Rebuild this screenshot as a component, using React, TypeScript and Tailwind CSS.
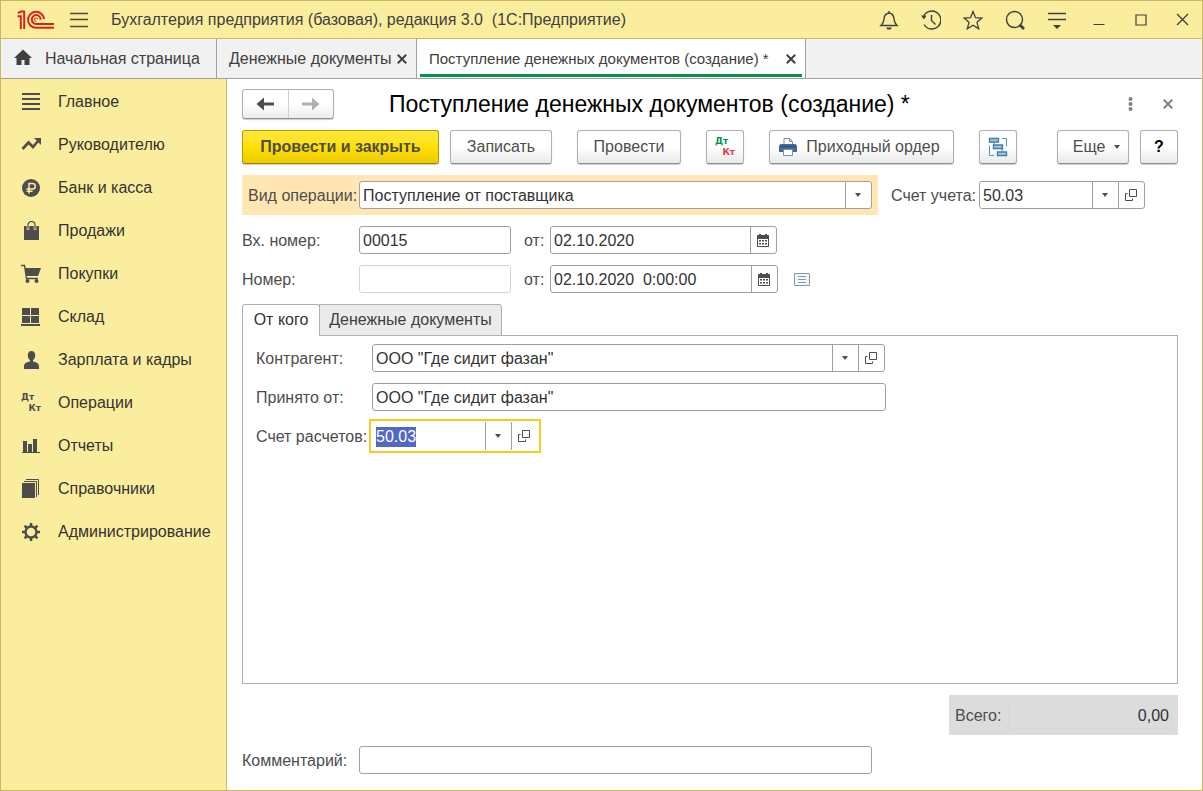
import { useEffect, useRef, useState } from 'react'
import type { ReactNode } from 'react'
import clsx from 'clsx'

const BUTTON =
  'h-[34px] flex items-center justify-center shrink-0 rounded-[3px] border border-[#b0b0b0] border-b-[#8f8f8f] bg-linear-to-b from-white from-50% to-[#e9e9e9] shadow-[0_1px_1px_rgba(0,0,0,0.2)] whitespace-nowrap'

const FIELD = 'h-7 flex rounded-[3px] border bg-white overflow-hidden'

const INPUT = 'flex-1 min-w-0 pt-0.5 bg-transparent text-[#333] outline-none'

const LABEL = 'shrink-0 pt-0.5 whitespace-nowrap'

/* Icons */

function Icon({ size = 20, className, children }: { size?: number; className?: string; children: ReactNode }) {
  return (
    <svg
      width={size}
      height={size}
      viewBox={`0 0 ${size} ${size}`}
      fill="none"
      stroke="currentColor"
      className={clsx('shrink-0', className)}
      aria-hidden="true"
    >
      {children}
    </svg>
  )
}

function Logo() {
  return (
    <svg width="37" height="20" viewBox="0 0 37 20" fill="none" stroke="#d9231d" strokeWidth="2" aria-label="1C">
      <path d="M.8 3.200 4 1.600h3.200V19M.5 6.200h3.300V19" />
      <path d="M27 9.200A8 8 0 1 0 19 17.800H37M23.600 9.800A4.400 4.400 0 1 0 19.400 13.900H37" />
      <path d="M20.600 9.400a1.600 1.600 0 1 0-1.400 1.800" strokeWidth="1" />
    </svg>
  )
}

function CrossIcon({ size = 10, width = 2 }: { size?: number; width?: number }) {
  return (
    <svg width={size} height={size} viewBox="0 0 10 10" stroke="currentColor" strokeWidth={width} className="shrink-0" aria-hidden="true">
      <path d="M.8.8l8.4 8.4M9.2.8.8 9.2" />
    </svg>
  )
}

function CaretIcon() {
  return (
    <svg width="8" height="4" viewBox="0 0 8 4" fill="#4d4d4d" aria-hidden="true">
      <path d="M1 0h6L4 4z" />
    </svg>
  )
}

function OpenIcon() {
  return (
    <svg width="12" height="12" viewBox="0 0 12 12" fill="none" stroke="#4d4d4d" aria-hidden="true">
      <path d="M4.5.5h7v7h-7zM2.5 4.5h-2v7h7v-2" />
    </svg>
  )
}

function CalendarIcon() {
  return (
    <svg width="12" height="13" viewBox="0 0 12 13" fill="#4d4d4d" aria-hidden="true">
      <path d="M2 0h2v1h4V0h2v1h1.500l.5.5v11l-.5.5H.5L0 12.500V1.500L.5 1H2z" />
      <path d="M1 5h10v7H1z" fill="#fff" />
      <path d="M2 6h2v1.500H2zM5 6h2v1.500H5zM8 6h2v1.500H8zM2 9h2v1.500H2zM5 9h2v1.500H5zM8 9h2v1.500H8z" />
    </svg>
  )
}

// Дебет / кредит
function DebitCredit({ colored }: { colored?: boolean }) {
  return (
    <span className="w-5 shrink-0 flex flex-col font-['DejaVu_Sans','Liberation_Sans',sans-serif] text-[9px] leading-[11px] font-bold">
      <span className={clsx('self-start', colored && 'text-[#009646]')}>Дт</span>
      <span className={clsx('self-end', colored && 'text-[#e03a3e]')}>Кт</span>
    </span>
  )
}

const SECTIONS: { title: string; icon: ReactNode }[] = [
  { title: 'Главное', icon: <Icon><path d="M1 2h18M1 7h18M1 12h18M1 17h18" strokeWidth="2" /></Icon> },
  {
    title: 'Руководителю',
    icon: (
      <Icon>
        <path d="M1.500 14 7.500 7.500l4.500 4.500 5-6" strokeWidth="2.600" />
        <path d="M13 3h7v7z" fill="currentColor" stroke="none" />
      </Icon>
    ),
  },
  {
    title: 'Банк и касса',
    icon: (
      <Icon>
        <circle cx="10" cy="10" r="9" fill="currentColor" stroke="none" />
        <path d="M8 15.500V5.500h3.500a2.500 2.500 0 0 1 0 5.500H5.500M5.500 13.200h6" stroke="#fbed9e" strokeWidth="1.500" />
      </Icon>
    ),
  },
  {
    title: 'Продажи',
    icon: (
      <Icon>
        <path d="M3 5h15v14H3z" fill="currentColor" stroke="none" />
        <path d="M7 9V4a3.500 3.500 0 0 1 7 0v5" stroke="#fbed9e" strokeWidth="2.600" />
        <path d="M7 8.500V4a3.500 3.500 0 0 1 7 0v4.500" strokeWidth="1.200" />
      </Icon>
    ),
  },
  {
    title: 'Покупки',
    icon: (
      <Icon>
        <path d="M0 1.500h3.500L5.500 14.500H17" strokeWidth="1.400" />
        <path d="M4 4h16l-3 8H5.200z" fill="currentColor" stroke="none" />
        <circle cx="6.500" cy="17" r="2" fill="currentColor" stroke="none" />
        <circle cx="15.500" cy="17" r="2" fill="currentColor" stroke="none" />
      </Icon>
    ),
  },
  {
    title: 'Склад',
    icon: (
      <Icon>
        <path d="M1 1h8v7H1zM10 1h8v7h-8zM1 9h8v7H1zM10 9h8v7h-8zM0 17h19v2H0z" fill="currentColor" stroke="none" />
      </Icon>
    ),
  },
  {
    title: 'Зарплата и кадры',
    icon: (
      <Icon>
        <path
          d="M10.500 1C13 1 14.200 2.800 14.200 5c0 2.300-.9 4.300-2.200 5.300v1.200c3 .7 6 1.500 6 4.500v3H3v-3c0-3 3-3.800 6-4.500v-1.200C7.700 9.300 6.800 7.300 6.800 5c0-2.200 1.200-4 3.700-4z"
          fill="currentColor"
          stroke="none"
        />
      </Icon>
    ),
  },
  { title: 'Операции', icon: <DebitCredit /> },
  {
    title: 'Отчеты',
    icon: (
      <Icon>
        <path d="M1 16h1V5h4v11h1V8h4v8h1V3h4v13h3v1H1z" fill="currentColor" stroke="none" />
      </Icon>
    ),
  },
  {
    title: 'Справочники',
    icon: (
      <Icon>
        <path d="M1 4h13v15H1z" fill="currentColor" stroke="none" />
        <path d="M3 2.500h12.500V18M5 .5h12.500V16" />
      </Icon>
    ),
  },
  {
    title: 'Администрирование',
    icon: (
      <Icon>
        <circle cx="10" cy="10" r="5.500" strokeWidth="2.400" />
        <path
          d="M10 1v3.500M10 15.500V19M1 10h3.500M15.500 10H19M3.600 3.600l2.500 2.500M13.900 13.900l2.500 2.500M3.600 16.400l2.500-2.500M13.900 6.100l2.500-2.500"
          strokeWidth="2.600"
        />
      </Icon>
    ),
  },
]

/* Form controls */

function AddonButton({ label, children }: { label: string; children: ReactNode }) {
  return (
    <button type="button" aria-label={label} className="w-[26px] shrink-0 flex items-center justify-center pr-0.5 border-l border-[#a0a0a0]">
      {children}
    </button>
  )
}

interface TextFieldProps {
  id: string
  value: string
  className: string
  disabled?: boolean
  addon?: ReactNode
}

function TextField({ id, value, className, disabled, addon }: TextFieldProps) {
  const [text, setText] = useState(value)
  return (
    <div className={clsx(FIELD, className, disabled ? 'border-[#d4d4d4]' : 'border-[#a0a0a0]')}>
      <input id={id} value={text} disabled={disabled} onChange={e => setText(e.target.value)} className={clsx(INPUT, 'px-[3px]')} />
      {addon}
    </div>
  )
}

const REFERENCE_ADDON = (
  <>
    <AddonButton label="Выбрать из списка"><CaretIcon /></AddonButton>
    <AddonButton label="Открыть"><OpenIcon /></AddonButton>
  </>
)

const CALENDAR_ADDON = <AddonButton label="Календарь"><CalendarIcon /></AddonButton>

/* Layout */

function TitleBar() {
  const button = 'w-[42px] h-full flex items-center justify-center'
  return (
    <header className="h-[38px] flex items-center pl-4 border-b border-[#c9b866] bg-[#fbed9e] text-[#404040]">
      <Logo />
      <button type="button" aria-label="Меню" className="ml-[15px]">
        <Icon>
          <path d="M1 3.500h18M1 9.500h18M1 16.500h18" stroke="#4d4a35" strokeWidth="1.300" />
        </Icon>
      </button>
      <h1 className="flex-1 min-w-0 ml-[22px] truncate whitespace-pre">Бухгалтерия предприятия (базовая), редакция 3.0  (1С:Предприятие)</h1>
      <div className="h-full flex items-center">
        <button type="button" aria-label="Уведомления" className={button}>
          <Icon>
            <path d="M2 15.500h16c-2-1.800-2.800-3.500-3-6.500-.2-3.500-1.500-5.500-5-6-3.500.5-4.800 2.500-5 6-.2 3-1 4.700-3 6.500zM10 3V1" strokeWidth="1.400" />
            <path d="M7 17.500h6l-1.500 2h-3z" fill="currentColor" stroke="none" />
          </Icon>
        </button>
        <button type="button" aria-label="История" className={button}>
          <Icon>
            <path d="M2.200 7.500a9 9 0 1 1 .8 7M10.500 5v5.500l4 4" strokeWidth="1.400" />
            <path d="M0 5.500h5.500L3 9.500z" fill="currentColor" stroke="none" />
          </Icon>
        </button>
        <button type="button" aria-label="Избранное" className={button}>
          <Icon>
            <path d="M10 1.500l2.500 6.200 6.500.4-5 4.200 1.700 6.500L10 15.200l-5.700 3.600L6 12.300 1 8.100l6.500-.4z" strokeWidth="1.300" />
          </Icon>
        </button>
        <button type="button" aria-label="Поиск" className={button}>
          <Icon>
            <circle cx="9.500" cy="9.500" r="8" strokeWidth="1.400" />
            <path d="M14.500 14.500l4.500 4.500" strokeWidth="2.800" />
          </Icon>
        </button>
        <button type="button" aria-label="Настройки" className={button}>
          <Icon>
            <path d="M1 3.500h18M1 9.500h18" strokeWidth="1.400" />
            <path d="M6 15h8l-4 4z" fill="currentColor" stroke="none" />
          </Icon>
        </button>
        <button type="button" aria-label="Свернуть" className={button}>
          <Icon size={12}><path d="M.5 10.500h11" /></Icon>
        </button>
        <button type="button" aria-label="Развернуть" className={button}>
          <Icon size={12}><path d="M1 1h10v10H1z" strokeWidth="1.200" /></Icon>
        </button>
        <button type="button" aria-label="Закрыть" className="w-10 h-full flex items-center justify-center">
          <CrossIcon size={13} width={1} />
        </button>
      </div>
    </header>
  )
}

function WindowTabs() {
  return (
    <nav className="h-10 flex border-b border-[#a0a0a0] bg-[#f1f1f1] text-[#404040] whitespace-nowrap">
      <a href="#home" className="w-[216px] flex items-center gap-3 pl-3 border-r border-[#a0a0a0]">
        <Icon>
          <path d="M10 .5 19 9h-2.500v7h-5v-5h-3v5h-5V9H1z" fill="currentColor" stroke="none" />
        </Icon>
        Начальная страница
      </a>
      <div className="w-[200px] flex items-center justify-between pl-3 pr-[9px] border-r border-[#a0a0a0]">
        <a href="#documents">Денежные документы</a>
        <button type="button" aria-label="Закрыть вкладку"><CrossIcon /></button>
      </div>
      <div className="w-[389px] flex px-[3px] pb-px border-r border-[#a0a0a0] bg-white">
        <div className="flex-1 flex items-center justify-between pl-[9px] pr-[6px] pt-1 border-b-3 border-[#009646] text-[15px]">
          <a href="#receipt" aria-current="page">Поступление денежных документов (создание) *</a>
          <button type="button" aria-label="Закрыть вкладку"><CrossIcon /></button>
        </div>
      </div>
    </nav>
  )
}

function Sidebar() {
  return (
    <aside className="w-[226px] shrink-0 pt-px border-r border-[#c9b866] bg-[#fbed9e] text-[#333]">
      <ul>
        {SECTIONS.map(s => (
          <li key={s.title}>
            <a href="#section" className="h-[43px] flex items-center gap-[17px] pl-5">
              <span className="flex text-[#4d4d4d]">{s.icon}</span>
              {s.title}
            </a>
          </li>
        ))}
      </ul>
    </aside>
  )
}

function FormHeader() {
  return (
    <div className="flex items-center h-[30px]">
      <div className="w-[92px] h-[30px] shrink-0 flex rounded-[3px] border border-[#b0b0b0] border-b-[#8f8f8f] bg-linear-to-b from-white from-50% to-[#ececec] shadow-[0_1px_1px_rgba(0,0,0,0.2)]">
        <button type="button" aria-label="Назад" className="flex-1 flex items-center justify-center text-[#4d4d4d]">
          <Icon size={18}>
            <path d="M4 9h14" strokeWidth="3" />
            <path d="M.5 9 8 2.500v13z" fill="currentColor" stroke="none" />
          </Icon>
        </button>
        <button type="button" aria-label="Вперед" className="flex-1 flex items-center justify-center border-l border-[#d0d0d0] text-[#b0b0b0]">
          <Icon size={18}>
            <path d="M0 9h14" strokeWidth="3" />
            <path d="M17.500 9 10 2.500v13z" fill="currentColor" stroke="none" />
          </Icon>
        </button>
      </div>
      <h2 className="flex-1 min-w-0 ml-[55px] truncate text-[23px] leading-[30px] text-black">Поступление денежных документов (создание) *</h2>
      <button type="button" aria-label="Действия" className="mr-[30px] text-[#808080]">
        <svg width="5" height="14" viewBox="0 0 5 14" fill="currentColor">
          <circle cx="2.500" cy="2" r="2" />
          <circle cx="2.500" cy="7" r="2" />
          <circle cx="2.500" cy="12" r="2" />
        </svg>
      </button>
      <button type="button" aria-label="Закрыть форму" className="mr-[5px] text-[#808080]"><CrossIcon /></button>
    </div>
  )
}

function Toolbar() {
  return (
    <div className="flex items-center mt-[11px]">
      <button
        type="button"
        className="w-[197px] h-[34px] shrink-0 rounded-[3px] border border-[#b89b00] border-b-[#998100] bg-linear-to-b from-[#ffe93a] via-[#ffe000] to-[#edcb00] shadow-[0_1px_1px_rgba(0,0,0,0.2)] font-bold"
      >
        Провести и закрыть
      </button>
      <button type="button" className={clsx(BUTTON, 'w-[102px] ml-[11px]')}>Записать</button>
      <button type="button" className={clsx(BUTTON, 'w-[104px] ml-[25px]')}>Провести</button>
      <button type="button" aria-label="Движения документа" className={clsx(BUTTON, 'w-[38px] ml-[25px]')}>
        <DebitCredit colored />
      </button>
      <button type="button" className={clsx(BUTTON, 'w-[185px] ml-[25px] pr-1 gap-[9px]')}>
        <Icon size={18}>
          <path d="M5 6.500v-6h5.500l3 3v3M10.500.5v3h3" stroke="#7890a8" />
          <path d="M1.500 6h15L18 7.500V14H0V7.500z" fill="#426a92" stroke="none" />
          <path d="M2 8.500h14" stroke="#244a72" />
          <path d="M4.500 11.500h9v6h-9z" fill="#fff" stroke="#7890a8" />
        </Icon>
        Приходный ордер
      </button>
      <button type="button" aria-label="Структура подчиненности" className={clsx(BUTTON, 'w-[38px] ml-[25px]')}>
        <Icon>
          <path d="M14 1.500h4.500v8M1.500 8.500v10H6" stroke="#5f93b8" />
          <path d="M6 5v4h8v5" stroke="#3f7fab" />
          <path d="M1.500 1.500h9v3.500h-9zM5.500 8h9v3.500h-9zM9.500 15h9v3.500h-9z" fill="#a9c8de" stroke="#3f7fab" strokeWidth="1.400" />
        </Icon>
      </button>
      <div className="flex-1" />
      <button type="button" className={clsx(BUTTON, 'w-[72px] gap-2 pl-2')}>
        Еще
        <CaretIcon />
      </button>
      <button type="button" aria-label="Справка" className={clsx(BUTTON, 'w-[38px] ml-[11px] font-bold text-black')}>?</button>
    </div>
  )
}

function SenderTab() {
  const accountRef = useRef<HTMLInputElement>(null)
  const [account, setAccount] = useState('50.03')

  useEffect(() => {
    accountRef.current?.focus()
    accountRef.current?.select()
  }, [])

  return (
    <div className="flex-1 pt-2 pl-[13px] pr-3 border border-[#b0b0b0]">
      <div className="flex items-center">
        <label htmlFor="counterparty" className={clsx(LABEL, 'w-[116px]')}>Контрагент:</label>
        <TextField id="counterparty" value={'ООО "Где сидит фазан"'} className="w-full max-w-[513px]" addon={REFERENCE_ADDON} />
      </div>
      <div className="flex items-center mt-[11px]">
        <label htmlFor="received-from" className={clsx(LABEL, 'w-[116px]')}>Принято от:</label>
        <TextField id="received-from" value={'ООО "Где сидит фазан"'} className="w-full max-w-[514px]" />
      </div>
      <div className="flex items-center mt-2">
        <label htmlFor="settlement-account" className={clsx(LABEL, 'w-[113px]')}>Счет расчетов:</label>
        <div className="w-[172px] h-[34px] flex py-px pr-0.5 border-2 border-[#f9c924] bg-white">
          <input
            id="settlement-account"
            ref={accountRef}
            value={account}
            onChange={e => setAccount(e.target.value)}
            className={clsx(INPUT, 'px-[5px] selection:bg-[#5168c4] selection:text-white')}
          />
          {REFERENCE_ADDON}
        </div>
      </div>
    </div>
  )
}

function ReceiptForm() {
  return (
    <main className="flex-1 min-w-0 flex flex-col pt-[10px] pl-[15px] pr-6 pb-4 bg-white text-[#4d4d4d]">
      <FormHeader />
      <Toolbar />

      {/* Реквизиты шапки */}
      <div className="flex items-center mt-[11px]">
        <div className="w-full max-w-[636px] flex items-center p-[6px] bg-[#ffe6b3]">
          <label htmlFor="operation" className={clsx(LABEL, 'w-[111px]')}>Вид операции:</label>
          <div className={clsx(FIELD, 'relative flex-1 border-[#a0a0a0]')}>
            <select id="operation" className={clsx(INPUT, 'appearance-none pl-[3px] pr-7')}>
              <option>Поступление от поставщика</option>
            </select>
            <span className="absolute inset-y-0 right-0 w-[26px] flex items-center justify-center pr-0.5 border-l border-[#a0a0a0] pointer-events-none">
              <CaretIcon />
            </span>
          </div>
        </div>
        <label htmlFor="account" className={clsx(LABEL, 'w-[88px] ml-[13px]')}>Счет учета:</label>
        <TextField id="account" value="50.03" className="w-[166px] shrink-0" addon={REFERENCE_ADDON} />
      </div>

      <div className="flex items-center mt-[11px]">
        <label htmlFor="incoming-number" className={clsx(LABEL, 'w-[117px]')}>Вх. номер:</label>
        <TextField id="incoming-number" value="00015" className="w-[152px]" />
        <label htmlFor="incoming-date" className={clsx(LABEL, 'w-[26px] ml-[13px]')}>от:</label>
        <TextField id="incoming-date" value="02.10.2020" className="w-[227px]" addon={CALENDAR_ADDON} />
      </div>

      <div className="flex items-center mt-[11px]">
        <label htmlFor="number" className={clsx(LABEL, 'w-[117px]')}>Номер:</label>
        <TextField id="number" value="" className="w-[152px]" disabled />
        <label htmlFor="date" className={clsx(LABEL, 'w-[26px] ml-[13px]')}>от:</label>
        <TextField id="date" value="02.10.2020  0:00:00" className="w-[228px]" addon={CALENDAR_ADDON} />
        <button type="button" aria-label="Список" className="ml-4">
          <svg width="16" height="13" viewBox="0 0 16 13" fill="#f5f8fb" stroke="#8796a8">
            <path d="M.5.5h15v12H.5z" />
            <path d="M4 3.500h8M4 6.500h8M4 9.500h8" />
          </svg>
        </button>
      </div>

      {/* Вкладки */}
      <div role="tablist" className="relative flex mt-[11px] -mb-px">
        <button type="button" role="tab" aria-selected="true" className="w-[78px] h-8 pb-0.5 rounded-t-[3px] border border-b-0 border-[#b0b0b0] bg-white text-[#333]">
          От кого
        </button>
        <button type="button" role="tab" aria-selected="false" className="w-[183px] h-8 -ml-px rounded-tr-[3px] border border-[#b0b0b0] bg-[#ebebeb] text-[#404040]">
          Денежные документы
        </button>
      </div>
      <SenderTab />

      {/* Итог */}
      <div className="self-end w-[229px] flex items-center mt-[11px] p-[6px] bg-[#dcdcdc]">
        <label htmlFor="total" className={clsx(LABEL, 'w-[53px]')}>Всего:</label>
        <output id="total" className="flex-1 h-7 flex items-center justify-end pt-0.5 pr-[2px] rounded-[3px] border border-[#d8d8d8] text-[#333]">0,00</output>
      </div>

      <div className="flex items-center mt-[11px]">
        <label htmlFor="comment" className={clsx(LABEL, 'w-[117px]')}>Комментарий:</label>
        <TextField id="comment" value="" className="w-full max-w-[513px]" />
      </div>
    </main>
  )
}

export default function App() {
  return (
    <div className="min-h-screen flex flex-col border border-[#c9b866] bg-white font-['Liberation_Sans',Arial,sans-serif] text-base leading-5">
      <TitleBar />
      <WindowTabs />
      <div className="flex-1 flex">
        <Sidebar />
        <ReceiptForm />
      </div>
    </div>
  )
}
